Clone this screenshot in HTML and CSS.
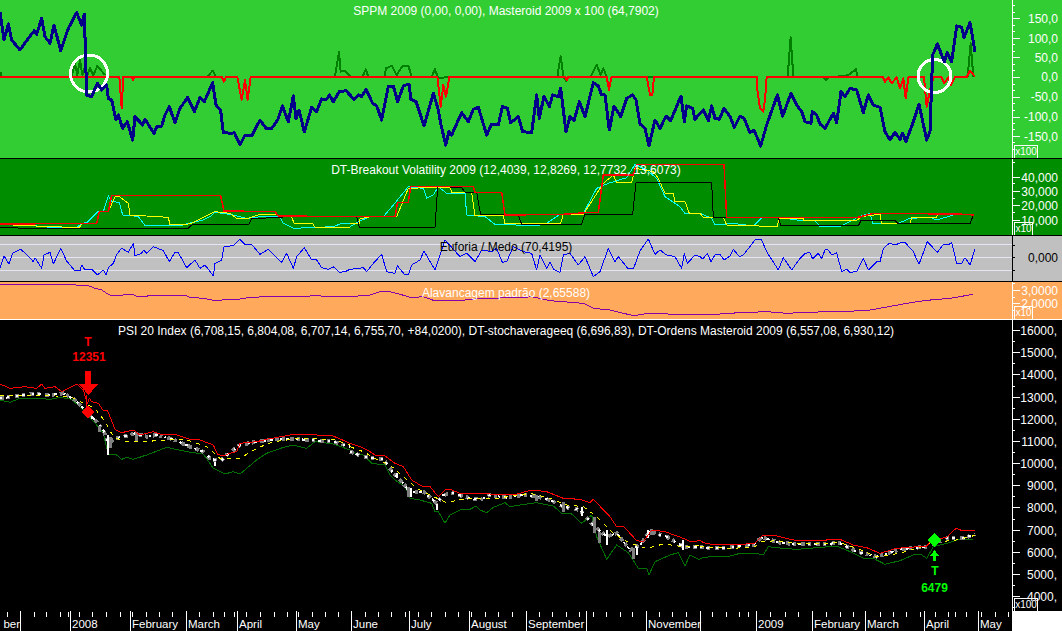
FILE: index.html
```html
<!DOCTYPE html>
<html lang="en">
<head>
	<meta charset="UTF-8">
	<title>PSI 20 Index</title>
	<link rel="stylesheet" href="styles.css">
</head>
<body>
<div id="chart">

	<!-- SPPM -->
	<div class="pane pane-sppm">
		<div class="plot">
			<svg viewBox="0 0 1012 158" width="1012" height="158">
				<g transform="scale(.33333)">
					<polyline class="l-dkgreen" points="0,230 3,218 5,230"/>
					<polyline class="l-dkgreen" points="215,230 225,190 232,225 240,180 247,225 255,200 262,225 270,205 280,225 292,198 315,225"/>
					<polyline class="l-dkgreen" points="622,230 638,212 648,230"/>
					<polyline class="l-dkgreen" points="1005,230 1017,155 1022,215 1035,212 1050,228"/>
				</g>
				<g transform="translate(350 0) scale(.33333)">
					<polyline class="l-dkgreen" points="38,230 47,208 55,230"/>
					<polyline class="l-dkgreen" points="103,230 108,205 125,197 140,225 158,197 175,197 185,230"/>
					<polyline class="l-dkgreen" points="245,230 255,208 265,235 298,230"/>
					<polyline class="l-dkgreen" points="622,230 632,168 640,230 650,245"/>
					<polyline class="l-dkgreen" points="722,230 740,195 752,225 760,205 770,230"/>
					<polyline class="l-dkgreen" points="890,232 912,232"/>
				</g>
				<g transform="translate(700 0) scale(.33333)">
					<polyline class="l-dkgreen" points="263,230 272,112 280,230"/>
					<polyline class="l-dkgreen" points="370,232 378,240 388,230"/>
					<polyline class="l-dkgreen" points="415,228 435,228 445,225 468,208 472,230"/>
					<polyline class="l-dkgreen" points="803,230 812,130 820,230"/>
				</g>

				<g transform="scale(.33333)">
					<polyline class="l-red2" points="0,230 358,230 365,325 370,230 395,230 399,240 403,230 665,230 672,245 678,230 712,230 725,300 735,240 743,300 752,230 1050,230"/>
				</g>
				<g transform="translate(350 0) scale(.33333)">
					<polyline class="l-red2" points="0,230 262,230 272,320 280,255 288,290 298,230 645,230 650,240 655,230 770,230 777,270 785,230 890,230 900,285 907,285 912,230 1050,230"/>
				</g>
				<g transform="translate(700 0) scale(.33333)">
					<polyline class="l-red2" points="0,230 170,230 172,270 180,325 190,335 195,300 200,230 548,230 555,245 565,232 575,250 590,232 600,265 610,235 617,295 625,232 672,232 680,320 690,270 700,232 725,232 732,250 745,232 752,255 765,232 800,232 810,212 825,230"/>
				</g>

				<circle class="ring" cx="89" cy="73.5" r="18.5"/>
				<circle class="ring" cx="934.5" cy="76" r="16.5"/>

				<g transform="scale(.33333)">
					<polyline class="l-navy" points="0,35 12,120 25,72 35,120 60,150 85,115 103,92 110,103 125,55 135,110 150,130 162,75 182,152 205,85 230,38 245,75 253,42 260,285 275,290 292,250 305,270 320,255 325,295 335,300 348,360 355,345 368,385 382,365 398,420 405,350 428,375 435,358 462,400 470,380 485,378 495,345 508,320 525,368 540,325 563,292 583,335 600,292 613,305 638,248 648,315 662,332 670,398 695,400 703,398 720,435 735,405 755,408 780,360 798,385 815,385 833,360 847,318 865,365 880,288 888,355 897,330 913,395 935,322 950,335 965,297 978,300 988,285 1000,305 1018,275 1038,272 1050,285"/>
				</g>
				<g transform="translate(350 0) scale(.33333)">
					<polyline class="l-navy" points="0,285 12,298 25,285 35,290 48,268 68,310 80,318 95,360 115,260 130,258 143,305 160,258 177,252 183,298 198,305 205,325 222,378 250,280 265,330 272,370 287,435 297,395 305,405 335,338 355,365 370,328 385,322 410,405 425,372 445,375 457,320 472,325 482,368 505,350 518,395 545,398 560,285 568,355 582,288 598,320 608,285 625,290 632,265 648,395 660,350 672,362 688,305 705,350 730,248 745,258 755,285 765,285 778,390 792,318 812,350 830,295 848,285 858,300 870,372 885,385 897,438 915,360 930,385 948,348 962,362 993,288 1003,365 1010,318 1028,325 1035,358 1050,340"/>
				</g>
				<g transform="translate(700 0) scale(.33333)">
					<polyline class="l-navy" points="0,340 10,330 25,362 35,318 45,355 58,358 72,325 90,350 103,382 120,348 132,355 150,398 162,390 182,438 200,375 232,285 248,348 273,280 290,315 305,335 315,365 333,370 337,335 350,345 360,372 375,385 400,340 410,368 423,275 435,290 450,265 470,270 490,338 505,285 520,315 540,322 555,395 570,420 585,397 600,418 608,400 618,425 640,365 657,312 680,420 690,395 698,165 712,132 733,185 742,158 755,185 770,78 785,82 792,112 810,68 825,155"/>
				</g>
			</svg>
			<p class="caption">SPPM 2009 (0,00, 0,00), Masteroid 2009 x 100 (64,7902)</p>
		</div>
		<div class="axis">
			<svg viewBox="1012 0 50 158" width="50" height="158">
				<path class="ticks" d="M1012 5h3M1012 12h3M1012 18h8M1012 25h3M1012 31h3M1012 38h8M1012 44h3M1012 51h3M1012 57h8M1012 64h3M1012 70h3M1012 77h8M1012 84h3M1012 90h3M1012 97h8M1012 103h3M1012 110h3M1012 117h8M1012 123h3M1012 129h3M1012 136h8M1012 142h3M1012 149h3"/>
				<text x="1058" y="23">150,0</text>
				<text x="1058" y="43">100,0</text>
				<text x="1058" y="62">50,0</text>
				<text x="1058" y="81">0,0</text>
				<text x="1058" y="101">-50,0</text>
				<text x="1058" y="121">-100,0</text>
				<text x="1058" y="141">-150,0</text>
			</svg>
			<span class="scale scale-wide">x100</span>
		</div>
	</div>

	<!-- DT-Breakout -->
	<div class="pane pane-breakout">
		<div class="plot">
			<svg viewBox="0 159 1012 76" width="1012" height="76">
				<g transform="translate(0 155) scale(.33333)">
					<polyline class="l-cyan" points="0,210 70,210 100,212 160,218 230,218 245,205 260,203 295,168 310,170 325,122 335,140 358,142 368,180 395,182 415,185 435,212 505,212 540,212 575,203 610,195 630,185 645,172 690,178 740,190 800,183 840,185 850,205 880,220 930,218 1000,215 1020,207 1050,207"/>
					<polyline class="l-yellow" points="0,208 80,212 160,215 238,218 245,207 290,207 298,170 325,170 345,125 358,125 385,145 390,180 505,187 510,210 565,207 575,205 645,170 690,175 710,190 745,190 775,180 830,180 875,185 882,205 938,205 945,217 1050,217"/>
					<polyline class="l-black" points="0,217 80,220 565,220 575,210 745,210 755,190 845,188 850,183 1050,185"/>
					<polyline class="l-red" points="0,207 290,205 298,170 325,170 335,122 662,122 672,168 825,170 835,183 1050,185"/>
				</g>
				<g transform="translate(350 155) scale(.33333)">
					<polyline class="l-cyan" points="0,215 25,200 60,185 100,185 130,150 175,95 220,100 230,130 250,120 265,95 290,115 345,115 350,180 405,185 435,208 560,212 590,205 630,178 700,175 740,100 775,85 830,68 855,28 890,45 920,70 945,125 990,155 1005,175 1050,175"/>
					<polyline class="l-yellow" points="0,205 28,205 30,192 60,185 140,185 175,100 260,97 300,97 305,112 365,112 375,182 460,182 465,207 632,205 640,178 700,178 760,85 790,60 800,82 845,82 855,40 910,50 925,70 945,115 970,115 975,140 1005,140 1018,175 1050,175"/>
					<polyline class="l-black" points="0,185 20,185 28,217 255,217 263,95 335,97 345,112 380,112 392,180 505,180 515,208 695,208 705,178 848,178 858,83 1050,83"/>
					<polyline class="l-red" points="0,185 135,185 143,142 175,142 182,95 370,95 375,112 455,112 465,180 640,178 720,172 745,172 760,60 850,60 860,28 1050,28"/>
				</g>
				<g transform="translate(700 155) scale(.33333)">
					<polyline class="l-cyan" points="0,175 35,190 45,210 100,205 160,213 185,188 240,187 290,195 345,197 360,215 420,215 460,195 475,185 510,175 518,205 590,207 630,190 690,187 710,195 760,180 775,180"/>
					<polyline class="l-yellow" points="0,175 10,187 70,187 80,210 120,212 232,214 237,190 310,190 312,197 475,195 480,185 540,178 545,207 590,207 630,205 635,187 710,187 712,178 820,180"/>
					<polyline class="l-black" points="0,83 35,83 40,187 235,187 243,213 475,213 483,196 585,196 595,207 810,207 820,180"/>
					<polyline class="l-red" points="0,28 72,28 80,187 475,187 520,175 775,177 823,180"/>
				</g>
			</svg>
			<p class="caption">DT-Breakout Volatility 2009 (12,4039, 12,8269, 12,7732, 13,6073)</p>
		</div>
		<div class="axis">
			<svg viewBox="1012 159 50 76" width="50" height="76">
				<path class="ticks" d="M1012 162h3M1012 177h8M1012 183h3M1012 191h8M1012 198h3M1012 205h8M1012 212h3M1012 220h8"/>
				<text x="1058" y="182">40,000</text>
				<text x="1058" y="196">30,000</text>
				<text x="1058" y="210">20,000</text>
				<text x="1058" y="225">10,000</text>
			</svg>
			<span class="scale">x10</span>
		</div>
	</div>

	<!-- Euforia / Medo -->
	<div class="pane pane-euforia">
		<div class="plot">
			<svg viewBox="0 236 1012 45" width="1012" height="45">
				<path class="levels" d="M0 244.5H1012M0 257.5H1012M0 270.5H1012"/>
				<g transform="translate(0 155) scale(.33333)">
					<polyline class="l-blue" points="0,338 12,303 27,327 38,295 62,283 80,298 100,320 105,308 125,340 132,300 150,292 160,327 182,280 200,318 225,348 240,348 245,330 255,345 275,342 292,360 310,345 318,360 325,338 340,325 350,298 365,280 385,292 400,265 405,302 425,295 430,285 440,295 460,275 490,287 508,320 525,292 535,293 560,338 585,315 600,340 615,330 640,363 645,325 665,315 672,275 700,272 720,253 735,268 755,268 780,298 805,283 845,322 860,295 880,340 890,305 913,278 935,315 950,315 965,338 985,343 1000,335 1018,352 1035,350 1050,343"/>
				</g>
				<g transform="translate(350 155) scale(.33333)">
					<polyline class="l-blue" points="0,343 40,338 50,350 70,325 95,298 110,350 135,355 142,332 165,360 175,360 185,330 210,315 222,288 255,345 285,255 330,305 350,295 375,320 395,285 425,290 440,280 457,322 470,320 490,275 520,290 545,295 560,345 570,300 590,340 600,322 610,342 630,352 640,300 660,295 685,330 705,305 730,365 750,350 775,280 795,320 805,305 835,342 850,342 870,288 895,252 915,298 930,285 950,300 975,305 995,340 1003,295 1012,325 1035,300 1050,305"/>
				</g>
				<g transform="translate(700 155) scale(.33333)">
					<polyline class="l-blue" points="0,305 8,312 22,295 33,320 45,300 60,298 72,315 90,303 100,283 118,305 130,300 165,255 185,255 200,290 235,345 250,308 275,345 300,310 315,295 330,293 338,312 355,295 365,310 375,285 385,285 395,300 410,293 425,350 440,342 450,352 470,350 490,310 505,345 530,320 540,320 550,280 568,265 585,270 605,262 615,262 640,290 657,328 682,260 712,292 730,268 745,270 755,262 770,325 785,325 795,308 810,330 825,282"/>
				</g>
			</svg>
			<p class="caption caption-dark">Euforia / Medo (70,4195)</p>
		</div>
		<div class="axis axis-dark">
			<svg viewBox="1012 236 50 45" width="50" height="45">
				<path class="ticks" d="M1012 245h3M1012 257h3M1012 270h3"/>
				<text x="1058" y="262">0,000</text>
			</svg>
		</div>
	</div>

	<!-- Alavancagem -->
	<div class="pane pane-alav">
		<div class="plot">
			<svg viewBox="0 282 1012 37" width="1012" height="37">
				<g transform="translate(0 155) scale(.33333)">
					<polyline class="l-purple" points="0,388 225,388 230,392 265,392 285,400 305,405 320,415 335,422 360,422 380,418 400,418 410,425 440,425 445,421 555,421 570,427 610,430 640,436 665,436 670,433 715,433 745,428 795,425 910,424 950,422 985,425 1050,425"/>
				</g>
				<g transform="translate(350 155) scale(.33333)">
					<polyline class="l-purple" points="0,425 60,420 90,410 110,408 140,415 185,428 220,425 250,436 350,435 390,430 510,428 545,425 600,437 700,445 730,460 780,465 850,482 890,476 950,477 1050,478"/>
				</g>
				<g transform="translate(700 155) scale(.33333)">
					<polyline class="l-purple" points="0,478 50,478 80,475 200,470 260,475 320,472 500,467 550,458 620,445 680,436 750,430 820,418"/>
				</g>
			</svg>
			<p class="caption">Alavancagem padrão (2,65588)</p>
		</div>
		<div class="axis">
			<svg viewBox="1012 282 50 37" width="50" height="37">
				<path class="ticks" d="M1012 283h3M1012 290h8M1012 297h3M1012 303h8M1012 310h3"/>
				<text x="1058" y="295">3,0000</text>
				<text x="1058" y="308">2,0000</text>
			</svg>
			<span class="scale">x10</span>
		</div>
	</div>

	<!-- PSI 20 -->
	<div class="pane pane-price">
		<div class="plot">
			<svg viewBox="0 320 1012 291" width="1012" height="291">
				<g transform="translate(0 340) scale(.33333)">
					<polyline class="l-dkgreen-thin" points="0,180 30,187 60,175 110,175 150,178 180,172 215,178 250,210 290,255 310,280 325,345 350,345 365,358 380,352 400,358 440,345 500,322 560,335 610,342 640,385 675,402 700,395 720,402 770,360 800,340 850,322 880,315 920,325 945,305 1000,312 1050,330"/>
					<polyline class="c-grey" points="0,175 40,170 100,162 150,165 190,160 225,180 265,220 290,245 310,270 325,310 345,295 370,290 405,280 440,290 470,285 520,298 570,320 610,335 630,355 660,365 680,345 720,315 770,305 830,298 900,298 1000,305 1050,320"/>
					<polyline class="c-white" points="0,175 40,170 100,162 150,165 190,160 225,180 265,220 290,245 310,270 325,310 345,295 370,290 405,280 440,290 470,285 520,298 570,320 610,335 630,355 660,365 680,345 720,315 770,305 830,298 900,298 1000,305 1050,320"/>
					<path class="body-grey" d="M333 290V325M410 275V305M300 258V275M572 315V328"/>
					<path class="body-white" d="M325 285V345M275 228V238M645 365V378"/>
					<polyline class="l-dash" points="0,168 100,165 210,170 240,185 285,205 315,245 340,290 370,305 430,305 500,300 560,300 620,320 660,355 720,355 770,325 820,305 900,295 1000,298 1050,315"/>
					<polyline class="l-red-fine" points="0,132 30,145 75,140 110,145 125,132 135,145 165,140 185,155 230,132 250,150 262,190 268,175 275,185 295,190 310,212 322,210 345,268 365,278 400,270 420,285 460,275 490,285 530,285 570,298 600,300 640,315 652,342 670,348 690,340 710,335 720,310 770,305 800,298 870,285 920,283 1000,288 1050,310"/>
				</g>
				<g transform="translate(350 400) scale(.33333)">
					<polyline class="l-dkgreen-thin" points="0,155 40,165 65,190 105,195 120,225 135,240 165,260 180,295 210,300 245,310 255,335 265,335 285,370 300,345 330,330 360,328 378,318 390,330 410,338 430,322 465,308 480,320 530,312 560,308 610,318 635,340 665,342 695,370 725,345 740,410 770,478 800,435 835,458 865,505 890,505 897,525 915,485 960,465 985,458 1005,498 1020,465 1050,480"/>
					<polyline class="c-grey" points="0,155 40,170 100,178 130,220 160,250 180,278 220,275 260,310 280,285 310,280 350,292 390,300 420,285 470,293 520,285 560,290 600,300 640,320 690,330 730,375 770,410 800,400 840,450 870,435 900,395 950,410 1000,440 1050,440"/>
					<polyline class="c-white" points="0,155 40,170 100,178 130,220 160,250 180,278 220,275 260,310 280,285 310,280 350,292 390,300 420,285 470,293 520,285 560,290 600,300 640,320 690,330 730,375 770,410 800,400 840,450 870,435 900,395 950,410 1000,440 1050,440"/>
					<path class="body-grey" d="M733 350V400M748 395V430M850 445V478M905 388V405M640 305V335M175 262V290M560 285V302"/>
					<path class="body-white" d="M182 265V290M695 320V348M770 390V435M893 390V415M860 440V465M1000 420V450M142 220V235M260 312V330"/>
					<polyline class="l-dash" points="0,140 40,155 80,178 120,195 160,230 200,265 240,285 290,308 350,295 440,295 540,280 600,295 650,315 700,320 740,350 790,400 840,430 890,445 940,432 1000,440 1050,436"/>
					<polyline class="l-red-fine" points="0,130 30,140 60,155 80,168 105,168 135,190 160,200 185,240 215,258 240,260 265,290 285,270 300,268 330,280 380,282 420,282 460,285 490,285 545,270 590,275 640,295 690,298 720,308 730,298 780,350 800,380 820,378 860,422 880,425 905,390 945,395 1000,415 1020,425 1050,422"/>
				</g>
				<g transform="translate(700 450) scale(.33333)">
					<polyline class="l-dkgreen-thin" points="0,325 30,320 90,318 120,310 170,310 190,315 205,290 250,295 290,298 410,288 450,305 490,325 520,325 555,343 600,332 640,315 665,315 680,325 700,290 740,280 770,270 820,268"/>
					<polyline class="c-grey" points="0,292 60,295 100,290 160,285 185,262 240,278 290,283 420,280 470,305 530,320 600,298 680,290 740,265 790,265 825,252"/>
					<polyline class="c-white" points="0,292 60,295 100,290 160,285 185,262 240,278 290,283 420,280 470,305 530,320 600,298 680,290 740,265 790,265 825,252"/>
					<polyline class="l-dash" points="0,290 100,295 165,290 185,275 230,272 300,282 420,278 470,295 530,320 600,310 660,292 700,275 760,272 830,255"/>
					<polyline class="l-red-fine" points="0,270 10,278 45,285 100,285 165,280 185,258 230,258 280,270 340,272 420,268 460,285 500,293 540,310 590,295 680,288 695,270 740,262 768,235 790,243 825,243"/>
				</g>

				<!-- sinal de venda -->
				<path class="mark-sell" d="M85 371h6v13h7l-9.500 11l-9.500-11h6zM88 405l6 7l-6 7l-6-7z"/>
				<path class="l-red-thin" d="M86 395V408"/>
				<text class="sign sign-sell" x="88" y="346">T</text>
				<text class="sign sign-sell" x="89" y="361">12351</text>

				<!-- sinal de compra -->
				<path class="mark-buy" d="M934.500 533l7 7l-7 7l-7-7zM934.500 550l4.500 6h-3v5h-3v-5h-3z"/>
				<text class="sign sign-buy" x="935" y="575">T</text>
				<text class="sign sign-buy" x="934.500" y="592">6479</text>
			</svg>
			<p class="caption">PSI 20 Index (6,708,15, 6,804,08, 6,707,14, 6,755,70, +84,0200), DT-stochaverageeq (6,696,83), DT-Ordens Masteroid 2009 (6,557,08, 6,930,12)</p>
		</div>
		<div class="axis">
			<svg viewBox="1012 320 50 291" width="50" height="291">
				<path class="ticks" d="M1012 330h8M1012 341h3M1012 352h8M1012 363h3M1012 374h8M1012 386h3M1012 397h8M1012 408h3M1012 419h8M1012 430h3M1012 441h8M1012 452h3M1012 463h8M1012 474h3M1012 485h8M1012 496h3M1012 507h8M1012 519h3M1012 530h8M1012 541h3M1012 552h8M1012 563h3M1012 574h8M1012 585h3M1012 596h8M1012 607h3"/>
				<text x="1057" y="335">16000,</text>
				<text x="1057" y="357">15000,</text>
				<text x="1057" y="379">14000,</text>
				<text x="1057" y="402">13000,</text>
				<text x="1057" y="424">12000,</text>
				<text x="1057" y="446">11000,</text>
				<text x="1057" y="468">10000,</text>
				<text x="1057" y="490">9000,</text>
				<text x="1057" y="512">8000,</text>
				<text x="1057" y="535">7000,</text>
				<text x="1057" y="557">6000,</text>
				<text x="1057" y="579">5000,</text>
				<text x="1057" y="601">4000,</text>
			</svg>
			<span class="scale scale-wide">x100</span>
		</div>
	</div>

	<!-- datas -->
	<div class="dates">
		<svg viewBox="0 611 1012 20" width="1012" height="20">
			<path class="ticks" d="M20.500 611V631M70.500 611V631M130.500 611V631M186.500 611V631M237.500 611V631M296.500 611V631M351.500 611V631M409.500 611V631M469.500 611V631M526.500 611V631M586.500 611V631M646.500 611V631M700.500 611V631M756.500 611V631M812.500 611V631M865.500 611V631M924.500 611V631M978.500 611V631"/>
			<path class="ticks" d="M7.500 612v5M34.500 612v5M46.500 612v5M60.500 612v5M68.500 612v5M79.500 612v5M92.500 612v5M106.500 612v5M120.500 612v5M132.500 612v5M146.500 612v5M159.500 612v5M172.500 612v5M199.500 612v5M213.500 612v5M224.500 612v5M234.500 612v5M246.500 612v5M260.500 612v5M274.500 612v5M287.500 612v5M298.500 612v5M312.500 612v5M325.500 612v5M338.500 612v5M365.500 612v5M378.500 612v5M391.500 612v5M405.500 612v5M418.500 612v5M431.500 612v5M445.500 612v5M458.500 612v5M471.500 612v5M485.500 612v5M498.500 612v5M512.500 612v5M539.500 612v5M552.500 612v5M566.500 612v5M579.500 612v5M593.500 612v5M606.500 612v5M620.500 612v5M632.500 612v5M659.500 612v5M672.500 612v5M686.500 612v5M712.500 612v5M726.500 612v5M739.500 612v5M748.500 612v5M770.500 612v5M785.500 612v5M798.500 612v5M826.500 612v5M840.500 612v5M853.500 612v5M880.500 612v5M893.500 612v5M906.500 612v5M920.500 612v5M935.500 612v5M948.500 612v5M955.500 612v5M966.500 612v5M981.500 612v5M995.500 612v5M1008.500 612v5"/>
			<text class="end" x="20" y="628">ber</text>
			<text x="72" y="628">2008</text>
			<text x="132" y="628">February</text>
			<text x="188" y="628">March</text>
			<text x="239" y="628">April</text>
			<text x="298" y="628">May</text>
			<text x="353" y="628">June</text>
			<text x="411" y="628">July</text>
			<text x="471" y="628">August</text>
			<text x="528" y="628">September</text>
			<text x="648" y="628">November</text>
			<text x="758" y="628">2009</text>
			<text x="814" y="628">February</text>
			<text x="867" y="628">March</text>
			<text x="926" y="628">April</text>
			<text x="980" y="628">May</text>
		</svg>
		<div class="corner"></div>
	</div>

</div>
</body>
</html>
```

FILE: styles.css
```css
html,body,p {margin:0;padding:0;}
body {
	width:1062px;
	height:631px;
	overflow:hidden;
	background:#000;
	font:12px "Liberation Sans",Arial,sans-serif;
}
svg {
	display:block;
	shape-rendering:crispEdges;
}
text {
	font:12px "Liberation Sans",Arial,sans-serif;
	fill:#fff;
	text-anchor:start;
}
polyline {
	fill:none;
	stroke-linejoin:round;
	vector-effect:non-scaling-stroke;
}
#chart {
	display:flex;
	flex-direction:column;
	width:1062px;
	height:631px;
}

/* panes */
.pane {
	display:flex;
	flex:none;
	box-sizing:border-box;
	border-bottom:1px solid #000;
}
.pane-sppm {
	height:159px;
	background:#32cd32;
}
.pane-breakout {
	height:77px;
	background:#008e00;
}
.pane-euforia {
	height:46px;
	background:#c0c0c0;
}
.pane-alav {
	height:38px;
	background:#ffa95c;
	border-bottom-color:#fff;
}
.pane-price {
	height:291px;
	background:#000;
	border-bottom:0;
}
.plot {
	position:relative;
	flex:none;
	width:1012px;
}
.caption {
	position:absolute;
	top:5px;
	left:0;
	width:1012px;
	color:#fff;
	text-align:center;
	line-height:13px;
	white-space:nowrap;
}
.caption-dark {
	color:#000;
}
.axis {
	position:relative;
	flex:none;
	width:50px;
	overflow:hidden;
}
.axis text {
	text-anchor:end;
}
.axis .ticks {
	stroke:#fff;
	stroke-width:1;
	fill:none;
}
.axis::before {
	content:"";
	position:absolute;
	top:0;
	bottom:0;
	left:0;
	width:1px;
	background:#fff;
}
.axis-dark::before {
	background:#000;
}
.axis-dark .ticks {
	stroke:#000;
}
.axis-dark text {
	fill:#000;
}
.scale {
	position:absolute;
	left:2px;
	bottom:0;
	box-sizing:border-box;
	width:19px;
	height:13px;
	border:1px solid #fff;
	border-bottom:0;
	color:#fff;
	font-size:10px;
	line-height:12px;
	text-align:center;
}
.scale-wide {
	width:24px;
}

/* lines */
.l-navy {
	stroke:#00008b;
	stroke-width:3;
}
.l-red2 {
	stroke:#f00;
	stroke-width:2;
}
.l-dkgreen {
	stroke:#007f00;
	stroke-width:2;
}
.l-dkgreen-thin {
	stroke:#007000;
	stroke-width:1;
}
.l-red {
	stroke:#f00;
	stroke-width:1.500;
}
.l-red-fine {
	stroke:#f00;
	stroke-width:1;
}
.l-red-thin {
	stroke:#f00;
	fill:none;
}
.l-cyan {
	stroke:#0ff;
	stroke-width:1;
}
.l-yellow {
	stroke:#ff0;
	stroke-width:1;
}
.l-black {
	stroke:#000;
	stroke-width:1;
}
.l-blue {
	stroke:#00f;
	stroke-width:1;
}
.l-purple {
	stroke:#8a00a8;
	stroke-width:1;
}
.l-dash {
	stroke:#ff0;
	stroke-width:1;
	stroke-dasharray:4 5;
}
.levels {
	stroke:#e4e4f4;
	stroke-width:1;
	fill:none;
}
.ring {
	fill:none;
	stroke:#fff;
	stroke-width:3;
}

/* candles */
.c-grey {
	stroke:#808080;
	stroke-width:4;
	stroke-dasharray:4 3 3 5;
}
.c-white {
	stroke:#fff;
	stroke-width:2;
	stroke-dasharray:2 4 3 7;
}
.body-grey {
	stroke:#808080;
	stroke-width:9;
	fill:none;
}
.body-white {
	stroke:#fff;
	stroke-width:6;
	fill:none;
}

/* signals */
.mark-sell {
	fill:#f00;
}
.mark-buy {
	fill:#0f0;
}
.sign {
	font-weight:bold;
	text-anchor:middle;
}
.sign-sell {
	fill:#f00;
}
.sign-buy {
	fill:#0f0;
}

/* date axis */
.dates {
	display:flex;
	flex:none;
	height:20px;
}
.dates svg {
	flex:none;
}
.dates text {
	font-size:11.500px;
}
.dates .ticks {
	stroke:#fff;
	stroke-width:1;
	fill:none;
}
.dates text.end {
	text-anchor:end;
}
.corner {
	flex:1;
	background:#fff;
}
```
